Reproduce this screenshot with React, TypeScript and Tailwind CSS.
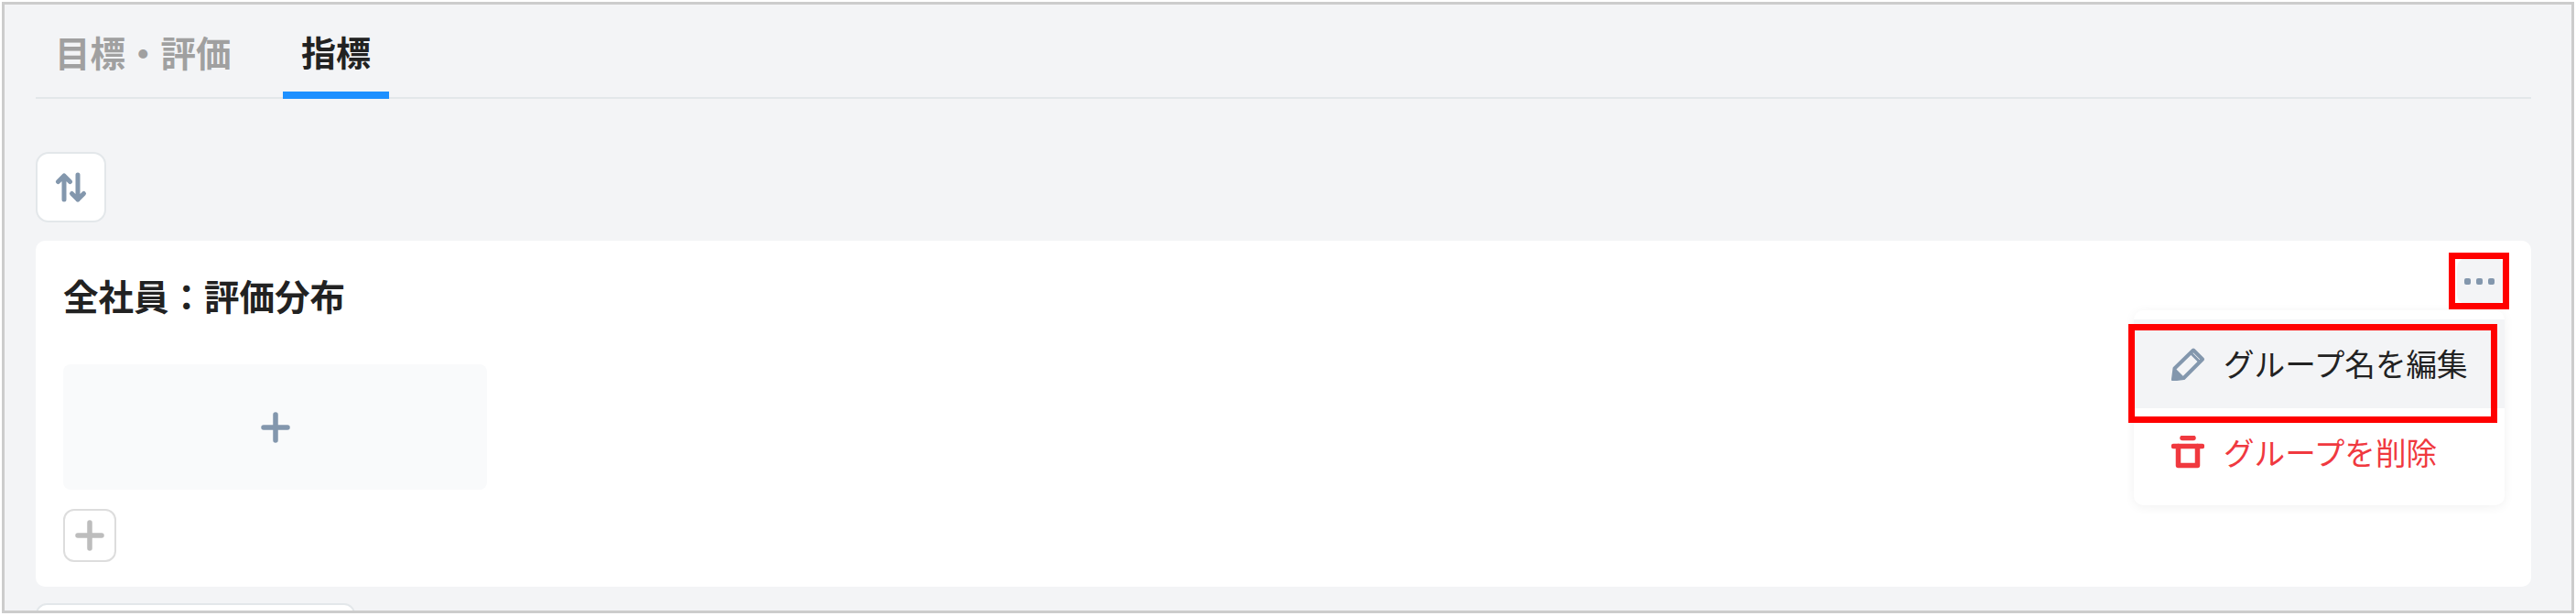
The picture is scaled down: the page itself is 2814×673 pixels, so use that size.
import React from 'react';

const font = { fontFamily: '"Noto Sans CJK JP", "Noto Sans", sans-serif' };

function SortIcon() {
  return (
    <svg width="36" height="36" viewBox="0 0 36 36" fill="none" stroke="#8397ad" strokeWidth="5" strokeLinecap="round" strokeLinejoin="round">
      <path d="M10 31V5M3.500 11.500 10 5l6.500 6.500" />
      <path d="M25 4v27M18.500 24.500 25 31l6.500-6.500" />
    </svg>
  );
}

function PlusIcon({ color }: { color: string }) {
  return (
    <svg width="32" height="34" viewBox="0 0 32 34" fill="none" stroke={color} strokeWidth="5.5" strokeLinecap="round">
      <path d="M16 3v28M3 17h26" />
    </svg>
  );
}

function PencilIcon() {
  return (
    <svg width="36" height="36" viewBox="0 0 36 36" fill="none" stroke="#8397ad" strokeWidth="4" strokeLinejoin="round">
      <path d="M24 2.500 34 12.500 13.500 33 2 34.500 3.500 22.500Z" />
      <path d="M1.500 35 3.500 23 13.500 33Z" fill="#8397ad" strokeWidth="2" />
      <path d="M21 5.500 31 15.500" strokeWidth="3" />
    </svg>
  );
}

function TrashIcon() {
  return (
    <svg width="36" height="36" viewBox="0 0 36 36" fill="none" stroke="#f0393f" strokeWidth="5.500" strokeLinecap="round" strokeLinejoin="round">
      <path d="M12 2.500h12" />
      <path d="M2.500 11.500h31" />
      <path d="M7.500 11.500v21h21v-21" />
    </svg>
  );
}

export default function App() {
  return (
    <div className="h-[673px] w-[2814px] overflow-hidden bg-white pt-[2px] pl-[2px]" style={font}>
      <div className="relative h-[668px] w-[2810px] overflow-hidden border-[3px] border-[#cccccc] bg-[#f3f4f6] pl-[34px] pr-[44px]">
        {/* Tabs */}
        <div className="flex h-[103px] border-b-2 border-[#e3e7ea]">
          <div className="flex h-[103px] w-[270px] items-center pl-[21px] text-[38.5px] font-bold text-[#a0a0a0]">
            目標・評価
          </div>
          <div className="flex h-[103px] w-[116px] items-center justify-center border-b-[8px] border-[#1e90ff] pt-[6px] text-[38px] font-bold text-[#222222]">
            指標
          </div>
        </div>

        {/* Sort */}
        <div className="mt-[58px] flex h-[77px] w-[77px] items-center justify-center rounded-[14px] border-2 border-[#e3e7ea] bg-white">
          <SortIcon />
        </div>

        {/* Group card */}
        <div className="relative mt-[20px] h-[378px] rounded-[10px] bg-white px-[30px] pt-[31px]">
          <div className="text-[38.5px] leading-[56px] font-bold text-[#222222]">全社員：評価分布</div>
          <div className="mt-[48px] flex h-[137px] w-[463px] items-center justify-center rounded-[8px] bg-[#f9fafb]">
            <PlusIcon color="#8397ad" />
          </div>
          <div className="mt-[21px] flex h-[58px] w-[58px] items-center justify-center rounded-[12px] border-2 border-[#dddddd]">
            <PlusIcon color="#bdbdbd" />
          </div>

          {/* Dots button */}
          <div className="absolute top-[19px] right-[29px] flex h-[50px] w-[52px] items-center justify-center gap-[6px] rounded-[10px] bg-[#f3f4f6] pr-[3px]">
            <span className="h-[7px] w-[7px] rounded-[2px] bg-[#8397ad]" />
            <span className="h-[7px] w-[7px] rounded-[2px] bg-[#8397ad]" />
            <span className="h-[7px] w-[7px] rounded-[2px] bg-[#8397ad]" />
          </div>

          {/* Menu */}
          <div className="absolute top-[76px] right-[29px] h-[213px] w-[405px] rounded-[10px] bg-white pt-[10px] shadow-[0_2px_12px_rgba(0,0,0,0.06)]">
            <div className="flex h-[97px] items-center gap-[21px] bg-[#f3f4f6] pl-[41px] text-[33.6px] text-[#222222]">
              <PencilIcon />
              <span>グループ名を編集</span>
            </div>
            <div className="flex h-[96px] items-center gap-[21px] pl-[41px] text-[33.6px] text-[#f0393f]">
              <TrashIcon />
              <span>グループを削除</span>
            </div>
          </div>
        </div>

        {/* Next group, cut off by the frame */}
        <div className="mt-[18px] h-[40px] w-[349px] rounded-[12px] border-2 border-[#e3e7ea] bg-white" />

        {/* Red highlights */}
        <div className="absolute top-[271px] left-[2670px] h-[62px] w-[66px] border-[7px] border-[#ff0000]" />
        <div className="absolute top-[349px] left-[2320px] h-[108px] w-[403px] border-[7px] border-[#ff0000]" />
      </div>
    </div>
  );
}
